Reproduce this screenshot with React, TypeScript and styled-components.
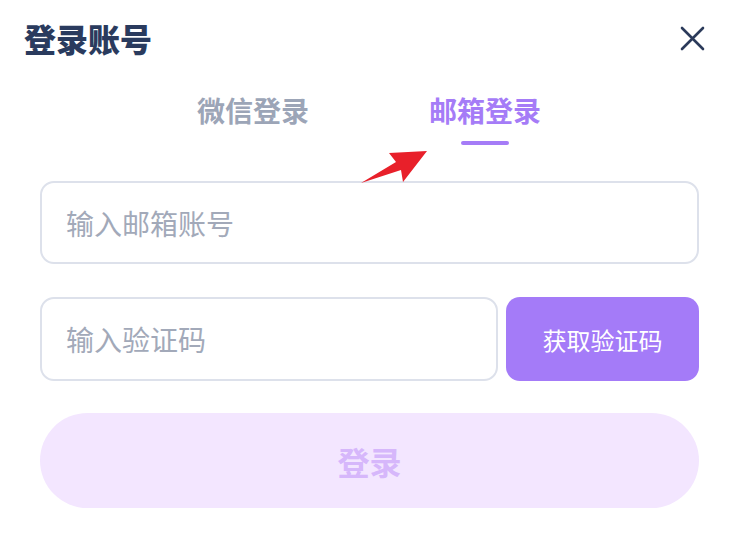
import { useState } from "react";
import styled, { createGlobalStyle } from "styled-components";

const GlobalStyle = createGlobalStyle`
    html, body {
        margin: 0;
        padding: 0;
        background: #ffffff;
    }
    body {
        font-family: "Noto Sans CJK SC", "Noto Sans", sans-serif;
    }
    * {
        box-sizing: border-box;
    }
`;

const Dialog = styled.div`
    position: relative;
    width: 738px;
    height: 536px;
    background: #ffffff;
`;

const Header = styled.div`
    display: flex;
    justify-content: space-between;
    align-items: center;
    height: 40px;
    margin-top: 18px;
    padding: 0 33px 0 24px;
`;

const Title = styled.h1`
    margin: 0;
    font-size: 32px;
    line-height: 40px;
    font-weight: 900;
    color: #2a3b5e;
`;

const CloseButton = styled.button`
    display: flex;
    align-items: center;
    justify-content: center;
    width: 25px;
    height: 25px;
    padding: 0;
    border: none;
    background: transparent;
    cursor: pointer;
`;

const Tabs = styled.div`
    display: flex;
    justify-content: center;
    gap: 120px;
    margin-top: 32px;
`;

const Tab = styled.button<{ $active: boolean }>`
    display: flex;
    flex-direction: column;
    align-items: center;
    padding: 0;
    border: none;
    background: transparent;
    font-family: inherit;
    font-size: 28px;
    line-height: 40px;
    font-weight: 700;
    color: ${(p) => (p.$active ? "#a57cf7" : "#9ca5b7")};
    cursor: pointer;

    &::after {
        content: "";
        display: block;
        width: 48px;
        height: 4px;
        margin-top: 11px;
        border-radius: 2px;
        background: ${(p) => (p.$active ? "#a57cf7" : "transparent")};
    }
`;

const Form = styled.div`
    display: flex;
    flex-direction: column;
    gap: 33px;
    margin-top: 36px;
    padding: 0 39px 0 40px;
`;

const Row = styled.div`
    display: flex;
    gap: 8px;
`;

const Field = styled.input<{ $h: number }>`
    flex: 1 1 auto;
    width: 100%;
    min-width: 0;
    height: ${(p) => p.$h}px;
    padding: 0 24px;
    border: 2px solid #dde1eb;
    border-radius: 14px;
    font-family: inherit;
    font-size: 28px;
    color: #2b3a5a;
    outline: none;
    background: #ffffff;

    &::placeholder {
        color: #a2a9b9;
    }
`;

const CodeButton = styled.button`
    flex-shrink: 0;
    width: 193px;
    height: 84px;
    border: none;
    border-radius: 14px;
    background: #a47bf8;
    color: #ffffff;
    font-family: inherit;
    font-size: 24px;
    cursor: pointer;
`;

const SubmitButton = styled.button`
    height: 95px;
    margin-top: -1px;
    border: none;
    border-radius: 48px;
    background: #f3e6ff;
    color: #d6b7fb;
    font-family: inherit;
    font-size: 32px;
    font-weight: 700;
    cursor: not-allowed;
`;

const Pointer = styled.svg`
    position: absolute;
    left: 356px;
    top: 128px;
    pointer-events: none;
`;

export default function App() {
    const [tab, setTab] = useState<"wechat" | "email">("email");

    return (
        <>
            <GlobalStyle />
            <Dialog>
                <Header>
                    <Title>登录账号</Title>
                    <CloseButton aria-label="关闭">
                        <svg width="25" height="25" viewBox="0 0 25 25">
                            <path
                                d="M2 2 L23 23 M23 2 L2 23"
                                stroke="#2b3a5a"
                                strokeWidth="2.6"
                                strokeLinecap="round"
                            />
                        </svg>
                    </CloseButton>
                </Header>

                <Tabs>
                    <Tab $active={tab === "wechat"} onClick={() => setTab("wechat")}>
                        微信登录
                    </Tab>
                    <Tab $active={tab === "email"} onClick={() => setTab("email")}>
                        邮箱登录
                    </Tab>
                </Tabs>

                <Form>
                    <Field $h={83} placeholder="输入邮箱账号" />
                    <Row>
                        <Field $h={84} placeholder="输入验证码" />
                        <CodeButton>获取验证码</CodeButton>
                    </Row>
                    <SubmitButton disabled>登录</SubmitButton>
                </Form>

                {/* 标注箭头 */}
                <Pointer width="76" height="42" viewBox="356 128 76 42">
                    <polygon
                        points="427,133 389,135 396,144 361,165 401,152 403,164"
                        fill="#e8202a"
                    />
                </Pointer>
            </Dialog>
        </>
    );
}
